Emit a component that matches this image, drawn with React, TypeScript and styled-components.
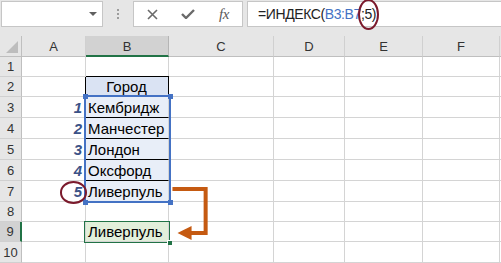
import styled, { createGlobalStyle } from 'styled-components';

const GlobalStyle = createGlobalStyle`
  html, body {
    margin: 0;
    padding: 0;
    background: #fff;
  }
`;

const Screen = styled.div`
  width: 501px;
  height: 263px;
  overflow: hidden;
  background: #fff;
  font-family: 'Liberation Sans', Arial, sans-serif;
`;

const Toolbar = styled.div`
  display: flex;
  align-items: flex-start;
  height: 36px;
  box-sizing: border-box;
  padding: 1px 0 0 1px;
  background: #e6e6e6;
`;

const Box = styled.div`
  height: 26px;
  box-sizing: border-box;
  background: #fff;
  border: 1px solid #c6c6c6;
`;

const NameBox = styled(Box)`
  width: 102px;
  display: flex;
  align-items: center;
  justify-content: flex-end;
  padding-right: 5px;
`;

const Caret = styled.span`
  width: 0;
  height: 0;
  border-left: 4px solid transparent;
  border-right: 4px solid transparent;
  border-top: 4px solid #606060;
`;

const Grip = styled.div`
  width: 30px;
  height: 26px;
  display: flex;
  flex-direction: column;
  align-items: center;
  justify-content: center;
  gap: 2px;
`;

const Dot = styled.span`
  width: 2px;
  height: 2px;
  background: #9c9c9c;
`;

const FxBox = styled(Box)`
  width: 110px;
  display: grid;
  grid-template-columns: repeat(3, 1fr);
  align-items: center;
  justify-items: center;
`;

const FxLabel = styled.span`
  font-family: 'Liberation Serif', 'Times New Roman', serif;
  font-style: italic;
  font-size: 15px;
  color: #5a5a5a;
  letter-spacing: -0.5px;
`;

const FormulaBar = styled(Box)`
  flex: 1;
  margin-left: 4px;
  border-right: none;
  display: flex;
  align-items: center;
  padding-left: 10px;
  font-size: 14px;
  color: #222;
  letter-spacing: -0.4px;
`;

const Ref = styled.span`
  color: #4472c4;
`;

const Marked = styled.span`
  position: relative;

  &::after {
    content: '';
    position: absolute;
    left: -3px;
    right: -3px;
    top: -7px;
    bottom: -8px;
    border: 2.5px solid #7b1a2c;
    border-radius: 50%;
  }
`;

const Sheet = styled.div`
  display: grid;
  grid-template-columns: 22px 64px 83px 105px 71px 78px 77px 1fr;
  grid-template-rows: 21px 20px 20px 21px 21px 21px 21px 21px 20px 20px 21px;
`;

const Corner = styled.div`
  grid-row: 1;
  grid-column: 1;
  display: flex;
  align-items: flex-end;
  justify-content: flex-end;
  padding: 0 3px 3px 0;
  background: #e6e6e6;
  border-right: 1px solid #bfbfbf;
  border-bottom: 1px solid #bfbfbf;
`;

const CornerMark = styled.span`
  width: 0;
  height: 0;
  border-left: 12px solid transparent;
  border-bottom: 12px solid #bdbdbd;
`;

const ColHead = styled.div<{ $col: number; $active?: boolean }>`
  grid-row: 1;
  grid-column: ${({ $col }) => $col};
  display: flex;
  align-items: center;
  justify-content: center;
  font-size: 13px;
  color: #333;
  background: ${({ $active }) => ($active ? '#d2d2d2' : '#e6e6e6')};
  border-right: 1px solid ${({ $active }) => ($active ? '#b5b5b5' : '#d0d0d0')};
  border-bottom: ${({ $active }) => ($active ? '2px solid #217346' : '1px solid #bfbfbf')};
  padding-top: 1px;
`;

const RowHead = styled.div<{ $row: number; $active?: boolean }>`
  grid-row: ${({ $row }) => $row};
  grid-column: 1;
  display: flex;
  align-items: center;
  justify-content: center;
  font-size: 13px;
  color: #333;
  background: ${({ $active }) => ($active ? '#d2d2d2' : '#e6e6e6')};
  border-right: ${({ $active }) => ($active ? '2px solid #217346' : '1px solid #bfbfbf')};
  border-bottom: 1px solid #d0d0d0;
`;

type Variant = 'plain' | 'head' | 'list' | 'result';

const Cell = styled.div<{ $row: number; $col: number; $variant: Variant; $align?: 'left' | 'right' }>`
  grid-row: ${({ $row }) => $row};
  grid-column: ${({ $col }) => $col};
  display: flex;
  align-items: flex-end;
  justify-content: ${({ $align }) => ($align === 'right' ? 'flex-end' : 'flex-start')};
  padding: 0 3px 1px 2px;
  font-size: 15px;
  line-height: 17px;
  color: #000;
  white-space: nowrap;
  border-right: 1px solid #d4d4d4;
  border-bottom: 1px solid #d4d4d4;
  background: ${({ $variant }) =>
    $variant === 'head' ? '#dae3f3' : $variant === 'list' ? '#e8eef8' : $variant === 'result' ? '#e2efda' : '#fff'};
  ${({ $variant }) =>
    $variant === 'head'
      ? 'border-right-color: #000; border-bottom-color: #000; box-shadow: -1px 0 0 #000, 0 -1px 0 #000; justify-content: center;'
      : ''}
  ${({ $variant }) => ($variant === 'list' ? 'border-bottom-color: #000;' : '')}
`;

const Index = styled.span<{ $circled?: boolean }>`
  position: relative;
  z-index: 2;
  font-weight: bold;
  font-style: italic;
  color: #3b5287;

  ${({ $circled }) =>
    $circled
      ? `&::after {
    content: '';
    position: absolute;
    left: -14px;
    right: -5px;
    top: -2px;
    bottom: -4px;
    border: 2.5px solid #7b1a2c;
    border-radius: 50%;
  }`
      : ''}
`;

const RangeFrame = styled.div`
  grid-column: 3;
  grid-row: 4 / 9;
  position: relative;
  margin: -2px -2px -1px -2px;
  border: 2px solid #4472c4;
  pointer-events: none;
`;

const Handle = styled.span<{ $x: 'left' | 'right'; $y: 'top' | 'bottom' }>`
  position: absolute;
  width: 5px;
  height: 5px;
  background: #4472c4;
  ${({ $x }) => ($x === 'left' ? 'left: -3px;' : 'right: -4px;')}
  ${({ $y }) => ($y === 'top' ? 'top: -3px;' : 'bottom: -4px;')}
`;

const ActiveFrame = styled.div`
  grid-column: 3;
  grid-row: 10;
  position: relative;
  margin: -1px -1px -1px -2px;
  border: 1px solid #217346;
  pointer-events: none;
`;

const FillHandle = styled.span`
  position: absolute;
  right: -3px;
  bottom: -3px;
  width: 4px;
  height: 4px;
  background: #217346;
  border-left: 1px solid #fff;
  border-top: 1px solid #fff;
`;

const ArrowLayer = styled.svg`
  grid-column: 3 / 5;
  grid-row: 8 / 11;
  width: 100%;
  height: 100%;
  overflow: visible;
  position: relative;
  z-index: 3;
  pointer-events: none;
`;

const columns = ['A', 'B', 'C', 'D', 'E', 'F', ''];
const cities = ['Кембридж', 'Манчестер', 'Лондон', 'Оксфорд', 'Ливерпуль'];

function renderRow(row: number) {
  const gridRow = row + 1;
  const cells = [];
  for (let c = 0; c < 7; c++) {
    const key = `${row}-${c}`;
    const gridCol = c + 2;
    if (c === 0 && row >= 3 && row <= 7) {
      const n = row - 2;
      cells.push(
        <Cell key={key} $row={gridRow} $col={gridCol} $variant="plain" $align="right">
          <Index $circled={n === 5}>{n}</Index>
        </Cell>
      );
    } else if (c === 1 && row === 2) {
      cells.push(
        <Cell key={key} $row={gridRow} $col={gridCol} $variant="head">
          Город
        </Cell>
      );
    } else if (c === 1 && row >= 3 && row <= 7) {
      cells.push(
        <Cell key={key} $row={gridRow} $col={gridCol} $variant="list">
          {cities[row - 3]}
        </Cell>
      );
    } else if (c === 1 && row === 9) {
      cells.push(
        <Cell key={key} $row={gridRow} $col={gridCol} $variant="result">
          Ливерпуль
        </Cell>
      );
    } else {
      cells.push(<Cell key={key} $row={gridRow} $col={gridCol} $variant="plain" />);
    }
  }
  return [
    <RowHead key={`h-${row}`} $row={gridRow} $active={row === 9}>
      {row}
    </RowHead>,
    ...cells,
  ];
}

export default function App() {
  const rows = Array.from({ length: 10 }, (_, i) => i + 1);

  return (
    <Screen>
      <GlobalStyle />
      <Toolbar>
        <NameBox>
          <Caret />
        </NameBox>
        <Grip>
          <Dot />
          <Dot />
          <Dot />
        </Grip>
        <FxBox>
          <svg width="11" height="11" viewBox="0 0 11 11">
            <path d="M1 1 L10 10 M10 1 L1 10" stroke="#6a6a6a" strokeWidth="1.6" fill="none" />
          </svg>
          <svg width="14" height="10" viewBox="0 0 14 10">
            <path d="M1 5 L5 9 L13 1" stroke="#6a6a6a" strokeWidth="2.4" fill="none" />
          </svg>
          <FxLabel>fx</FxLabel>
        </FxBox>
        <FormulaBar>
          =ИНДЕКС(<Ref>B3:B7</Ref>
          <Marked>;5)</Marked>
        </FormulaBar>
      </Toolbar>

      <Sheet>
        <Corner>
          <CornerMark />
        </Corner>
        {columns.map((col, i) => (
          <ColHead key={`c-${i}`} $col={i + 2} $active={col === 'B'}>
            {col}
          </ColHead>
        ))}
        {rows.map((r) => renderRow(r))}

        <RangeFrame>
          <Handle $x="left" $y="top" />
          <Handle $x="right" $y="top" />
          <Handle $x="left" $y="bottom" />
          <Handle $x="right" $y="bottom" />
        </RangeFrame>
        <ActiveFrame>
          <FillHandle />
        </ActiveFrame>
        <ArrowLayer viewBox="0 0 187 61" preserveAspectRatio="none">
          <path d="M86 8 H119 V52 H102" stroke="#c55a11" strokeWidth="4" fill="none" />
          <path d="M91 52 L105 45 L105 59 Z" fill="#c55a11" />
        </ArrowLayer>
      </Sheet>
    </Screen>
  );
}
